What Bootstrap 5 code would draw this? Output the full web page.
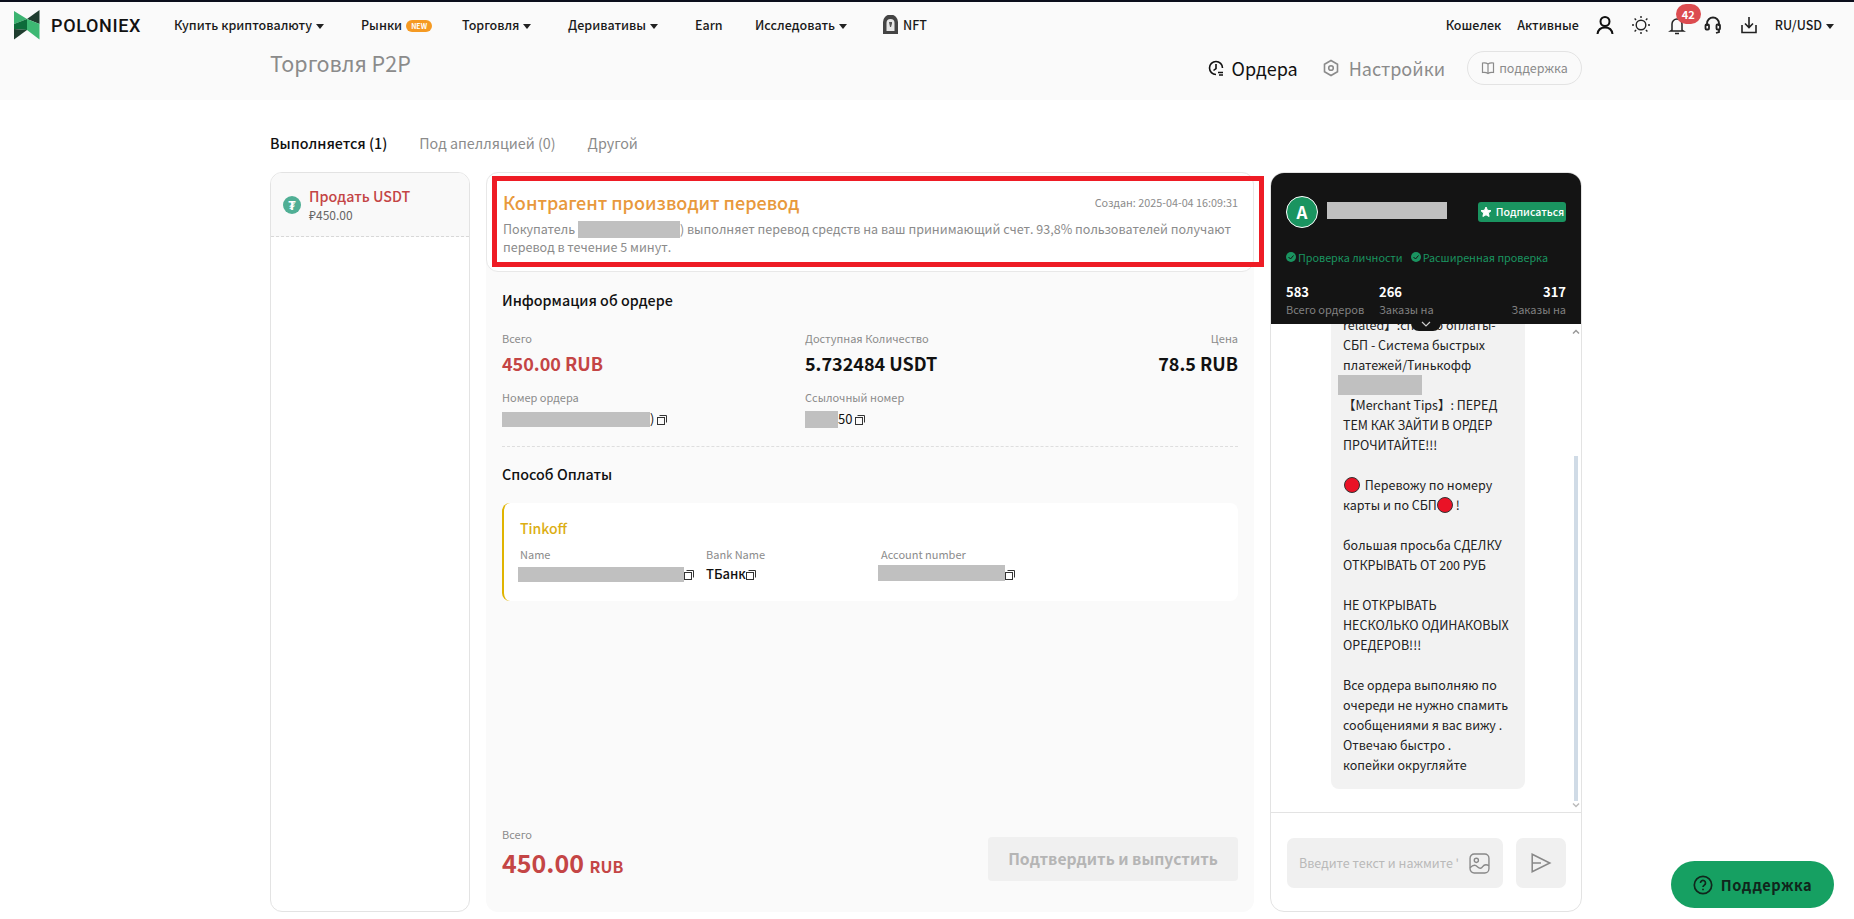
<!DOCTYPE html>
<html lang="ru">

<head>
    <meta charset="UTF-8">
    <meta name="viewport" content="width=device-width, initial-scale=1.0">
    <title>Торговля P2P</title>
    <link href="https://cdn.jsdelivr.net/npm/bootstrap@5.3.3/dist/css/bootstrap.min.css" rel="stylesheet">
    <script src="https://cdn.jsdelivr.net/npm/bootstrap@5.3.3/dist/js/bootstrap.bundle.min.js"></script>
    <style>
        html, body {
            height: 919px;
            overflow: hidden;
        }

        body {
            background: #fff;
            color: #111;
            font-family: "Noto Sans CJK SC", "Noto Sans", sans-serif;
            font-size: 13px;
            border-top: 2px solid #0b0e1c;
        }

        .top-area { background: #fafafa; height: 98px; }

        .top-nav { height: 46px; padding: 0 14px; }

        .logo-word { font-family: "Roboto", sans-serif; font-size: 18px; font-weight: 500; margin-left: 11px; width: 123px; letter-spacing: .65px; color: #111; flex-shrink: 0; }

        .nav-item-p { font-size: 12.5px; font-weight: 500; color: #1a1a1a; white-space: nowrap; flex-shrink: 0; }

        .caret-d { display: inline-block; border-left: 4px solid transparent; border-right: 4px solid transparent; border-top: 5px solid #222; margin-left: 4px; vertical-align: 1px; }

        .new-tag { background: #f59a23; color: #fff; font-size: 7px; line-height: 12px; border-radius: 6px; padding: 0 5px; margin-left: 4px; display: inline-block; vertical-align: 1px; font-weight: 700; }

        .nav-a { width: 187px; }
        .nav-b { width: 101px; }
        .nav-c { width: 106px; }
        .nav-d { width: 127px; }
        .nav-e { width: 60px; }
        .nav-f { width: 127px; }

        .nav-ico { margin-left: 16px; }

        .ru-usd { margin-left: 16px; margin-right: 6px; }

        .bell-wrap { position: relative; }

        .bell-count { position: absolute; left: 9px; top: -11px; width: 25px; height: 20px; border-radius: 10px; background: #dc4c50; color: #fff; font-size: 11px; font-weight: 700; line-height: 20px; text-align: center; }

        .page-wrap { width: 1312px; margin-left: 270px; }

        .sub-head { height: 52px; }

        .page-title { font-size: 21.5px; color: #8b8b8b; line-height: 30px; }

        .side-links { margin-top: 3px; }

        .side-link { font-size: 18px; color: #111; }
        .side-link.off { color: #8b8b8b; margin-left: 25px; }

        .order-ico { margin-right: 7px; }
        .set-ico { margin-right: 10px; }

        .help-pill { height: 34px; width: 115px; border: 1px solid #e3e3e3; border-radius: 17px; color: #8b8b8b; font-size: 12.5px; margin-left: 22px; }

        .tabs-row { height: 72px; font-size: 14.3px; padding-top: 32px; gap: 32px; line-height: 22px; color: #8b8b8b; }
        .tabs-row .on { color: #111; font-weight: 500; }

        .columns-row { height: 740px; gap: 16px; }

        .left-col { width: 200px; border: 1px solid #e3e3e3; border-radius: 12px; overflow: hidden; }

        .left-item { height: 64px; background: #f9f9f9; border-bottom: 1px dashed #d8d8d8; padding: 0 10px 0 12px; gap: 8px; }

        .left-item .ttl { color: #c44545; font-size: 14.3px; font-weight: 500; line-height: 20px; }
        .left-item .sum { color: #666; font-size: 12px; line-height: 18px; }

        .tether { width: 18px; height: 18px; border-radius: 50%; background: #50af95; color: #fff; font-size: 13px; line-height: 18px; text-align: center; font-weight: 700; }

        .mid-col { width: 768px; background: #fafafa; border-radius: 12px; position: relative; }

        .status-box { height: 100px; background: #fff; border: 1px solid #e8e8e8; border-radius: 12px; padding: 15px 15px 0 16px; }

        .status-ttl { color: #e8993c; font-size: 18px; font-weight: 500; line-height: 28px; }
        .status-date { color: #8b8b8b; font-size: 10.8px; }
        .status-txt { color: #8b8b8b; font-size: 12.55px; line-height: 18px; margin-top: 4px; white-space: nowrap; }

        .red-frame { position: absolute; left: 6px; top: 4px; width: 772px; height: 91px; border: 5px solid #ee1c25; pointer-events: none; }

        .hide-box { display: inline-block; background: #c0c0c0; vertical-align: middle; }

        .hb-buyer { width: 102px; height: 17px; vertical-align: -4px; }
        .hb-order { width: 148px; height: 15px; vertical-align: -3px; }
        .hb-ref { width: 33px; height: 17px; vertical-align: -4px; }
        .hb-name { width: 166px; height: 15px; margin-left: -2px; vertical-align: -3px; }
        .hb-acc { width: 127px; height: 16px; margin-left: -3px; vertical-align: -2px; }
        .hb-user { width: 120px; height: 17px; margin-left: 9px; margin-top: -4px; }

        .info-wrap { padding: 0 16px; }

        .block-ttl { font-size: 14.3px; font-weight: 500; line-height: 20px; color: #111; }

        .info-ttl { margin-top: 18px; }
        .info-1 { margin-top: 20px; }
        .info-2 { margin-top: 14px; }
        .dash-a { margin-top: 17px; }
        .pay-ttl { margin-top: 17px; margin-bottom: 19px; }

        .lbl { font-size: 11px; color: #8b8b8b; line-height: 16px; }
        .big-val { font-size: 18px; font-weight: 700; line-height: 24px; color: #111; margin-top: 5px; }
        .red-t { color: #c44545; }

        .info-cols { display: grid; grid-template-columns: 303px 1fr 1fr; }

        .small-val { font-size: 13px; line-height: 20px; color: #111; }
        .val-row { margin-top: 4px; }

        .copy-i { width: 10px; height: 10px; vertical-align: -1px; }

        .dash-line { border-top: 1px dashed #dedede; }

        .pay-card { height: 98px; background: #fff; border-left: 2px solid #e0b400; border-radius: 8px; padding: 14px 16px 0 16px; }
        .pay-name { color: #dcae13; font-size: 14px; font-weight: 500; line-height: 22px; }
        .pay-cols { display: grid; grid-template-columns: 186px 175px 1fr; margin-top: 7px; }
        .pay-val { margin-top: 2px; font-weight: 500; }

        .bottom-bar { margin-top: auto; padding: 0 16px 30px; }
        .sum-big { font-size: 25px; font-weight: 700; line-height: 32px; color: #c44545; }
        .sum-big small { font-size: 16px; }
        .btn-off { width: 250px; height: 44px; background: #f0f0f0; color: #b5b5b5; font-size: 15.7px; font-weight: 700; border-radius: 4px; margin-bottom: 1px; }

        .chat-col { width: 312px; border: 1px solid #e3e3e3; border-radius: 14px; overflow: hidden; position: relative; }

        .chat-head { height: 152px; background: #141414; padding: 24px 16px 0 16px; margin: -1px -1px 0; position: relative; z-index: 2; overflow: hidden; flex-shrink: 0; }

        .chat-ava { width: 32px; height: 32px; border-radius: 50%; background: #1a9460; border: 1px solid #fff; color: #fff; font-weight: 700; font-size: 17px; line-height: 30px; text-align: center; }

        .follow-btn { width: 88px; background: #1a9460; color: #fff; font-size: 10.6px; font-weight: 500; height: 20px; line-height: 20px; border-radius: 3px; white-space: nowrap; }

        .verify-row { color: #1a9460; font-size: 10.8px; margin-top: 20px; line-height: 18px; gap: 8px; }
        .vr-item { white-space: nowrap; gap: 2px; }

        .stat-cols { display: grid; grid-template-columns: 93px 1fr 1fr; margin-top: 17px; color: #fff; }
        .stat-num { font-size: 13px; font-weight: 700; line-height: 18px; }
        .stat-lbl { font-size: 11px; color: #808080; line-height: 16px; width: 58px; }
        .stat-wide { width: auto; white-space: nowrap; }

        .toggle-tab { position: absolute; left: 140px; top: 146px; width: 30px; height: 12px; background: #141414; border-radius: 0 0 8px 8px; z-index: 3; padding-top: 2px; }

        .msg-list { flex: 1 1 0; overflow: hidden; justify-content: flex-end; padding: 0 0 23px 60px; min-height: 0; }

        .msg-bubble { width: 194px; background: #f2f2f2; border-radius: 0 0 8px 8px; padding: 0 8px 14px 12px; line-height: 20px; font-size: 12.5px; color: #222; flex-shrink: 0; }

        .hide-line { width: 84px; height: 20px; margin-left: -5px; display: block; }

        .red-dot { display: inline-block; width: 16px; height: 16px; border-radius: 50%; background: #ea1226; border: 1px solid #333; vertical-align: -3px; }
        .dot-first { margin-left: 1px; margin-right: 2px; }

        .scroll-thumb { position: absolute; right: 3px; top: 283px; bottom: 110px; width: 4px; background: #d0dbe6; }

        .scroll-arr { position: absolute; right: 1px; width: 8px; height: 8px; }
        .arr-up { top: 155px; }
        .arr-down { bottom: 102px; }

        .chat-foot { height: 99px; border-top: 1px solid #e3e3e3; padding: 25px 15px 0 16px; gap: 13px; flex-shrink: 0; }

        .chat-input { width: 217px; height: 50px; background: #f0f0f0; border-radius: 7px; padding: 0 13px 0 12px; color: #b9b9b9; font-size: 12.5px; white-space: nowrap; overflow: hidden; }

        .input-ph { width: 170px; overflow: hidden; }

        .send-btn { width: 50px; height: 50px; background: #f0f0f0; border-radius: 7px; }

        .help-float { position: fixed; right: 20px; bottom: 11px; width: 163px; height: 47px; background: #16a062; color: #10261c; border-radius: 24px; font-size: 14.6px; font-weight: 700; letter-spacing: .5px; gap: 8px; }
    </style>
</head>

<body>
    <div class="top-area">
        <div class="top-nav d-flex align-items-center">
            <svg width="26" height="30" viewBox="14 11 26 30">
                <path fill="#3cb371" d="M14 12L27 20L14 25Z" />
                <path fill="#1f3d2f" d="M39.5 11L27 20L39.5 25Z" />
                <path fill="#0d6b3a" d="M14 25L27 20V31L14 30Z" />
                <path fill="#3db873" d="M27 20L39.5 25V40.5L27 31Z" />
                <path fill="#1f3d2f" d="M14 30L27 31L14 40.5Z" />
            </svg>
            <span class="logo-word">POLONIEX</span>
            <span class="nav-item-p nav-a">Купить криптовалюту<i class="caret-d"></i></span>
            <span class="nav-item-p nav-b">Рынки<span class="new-tag">NEW</span></span>
            <span class="nav-item-p nav-c">Торговля<i class="caret-d"></i></span>
            <span class="nav-item-p nav-d">Деривативы<i class="caret-d"></i></span>
            <span class="nav-item-p nav-e">Earn</span>
            <span class="nav-item-p nav-f">Исследовать<i class="caret-d"></i></span>
            <span class="nav-item-p d-flex align-items-center gap-1">
                <svg width="17" height="20" viewBox="0 0 17 20">
                    <path fill="#444" d="M1 19V7a7 7 0 0 1 15 0v12z" />
                    <path fill="#e6e6e6" d="M4.5 16V8q0-4 4-4t4 4v8z" />
                    <path fill="#555" d="M7 7h3v1.5L9 12H8z" />
                </svg>
                NFT
            </span>

            <div class="ms-auto d-flex align-items-center">
                <span class="nav-item-p">Кошелек</span>
                <span class="nav-item-p ms-3">Активные</span>
                <svg class="ms-3" width="20" height="20" viewBox="0 0 20 20" fill="none" stroke="#111" stroke-width="2">
                    <circle cx="10" cy="6.5" r="4.5" />
                    <path d="M2.5 19c.5-4 3.5-6.5 7.5-6.5s7 2.5 7.5 6.5" />
                </svg>
                <svg class="nav-ico" width="20" height="20" viewBox="0 0 20 20" fill="none" stroke="#222" stroke-width="1.4">
                    <circle cx="10" cy="10" r="4.8" />
                    <path d="M10 1v2M10 17v2M1 10h2M17 10h2M3.6 3.6l1.5 1.5M14.9 14.9l1.5 1.5M3.6 16.4l1.5-1.5M14.9 5.1l1.5-1.5" />
                </svg>
                <span class="bell-wrap nav-ico d-flex">
                    <svg width="20" height="20" viewBox="0 0 20 20" fill="none" stroke="#222" stroke-width="1.5">
                        <path d="M5 15V9a5 5 0 0 1 10 0v6l1.5 1h-13zM8 18.5h4" />
                    </svg>
                    <span class="bell-count">42</span>
                </span>
                <svg class="nav-ico" width="20" height="20" viewBox="0 0 20 20" fill="none" stroke="#222" stroke-width="1.8">
                    <path d="M4 11V8.5a6 6 0 0 1 12 0V11" />
                    <rect x="2.5" y="9.5" width="3.5" height="5" rx="1" />
                    <rect x="13.5" y="9.5" width="3.5" height="5" rx="1" />
                    <path d="M16 14.5V17l-3 1" />
                </svg>
                <svg class="nav-ico" width="20" height="20" viewBox="0 0 20 20" fill="none" stroke="#222" stroke-width="1.6">
                    <path d="M10 2v10M6 8.5l4 4 4-4M3 10v7.5h14V10" />
                </svg>
                <span class="nav-item-p ru-usd">RU/USD<i class="caret-d"></i></span>
            </div>
        </div>
        <div class="page-wrap sub-head d-flex justify-content-between align-items-start">
            <div class="page-title">Торговля P2P</div>
            <div class="d-flex align-items-center side-links">
                <span class="side-link d-flex align-items-center">
                    <svg class="order-ico" width="18" height="18" viewBox="0 0 18 18" fill="none" stroke="#111" stroke-width="1.6">
                        <path d="M9 15.5a6.5 6.5 0 1 1 6.5-6.5M9 5v4.5l-2.5 2M11 13.5h5M12 16h4" />
                    </svg>
                    Ордера
                </span>
                <span class="side-link off d-flex align-items-center">
                    <svg class="set-ico" width="16" height="18" viewBox="0 0 16 18" fill="none" stroke="#8b8b8b" stroke-width="1.6">
                        <path d="M8 1.5l6.5 3.75v7.5L8 16.5l-6.5-3.75v-7.5z" />
                        <circle cx="8" cy="9" r="2.3" />
                    </svg>
                    Настройки
                </span>
                <span class="help-pill d-flex align-items-center justify-content-center gap-1">
                    <svg width="14" height="14" viewBox="0 0 14 14" fill="none" stroke="#8b8b8b" stroke-width="1.2">
                        <path d="M7 3Q5 1.5 1.5 2v9.5Q5 11 7 12.5 9 11 12.5 11.5V2Q9 1.5 7 3zV12.5" />
                    </svg>
                    поддержка
                </span>
            </div>
        </div>
    </div>

    <div class="page-wrap">
        <div class="tabs-row d-flex">
            <span class="on">Выполняется (1)</span>
            <span>Под апелляцией (0)</span>
            <span>Другой</span>
        </div>
        <div class="columns-row d-flex">
            <div class="left-col">
                <div class="left-item d-flex align-items-center">
                    <span class="tether">₮</span>
                    <div>
                        <div class="ttl">Продать USDT</div>
                        <div class="sum">₽450.00</div>
                    </div>
                </div>
            </div>

            <div class="mid-col d-flex flex-column">
                <div class="status-box">
                    <div class="d-flex justify-content-between align-items-center">
                        <span class="status-ttl">Контрагент производит перевод</span>
                        <span class="status-date">Создан: 2025-04-04 16:09:31</span>
                    </div>
                    <div class="status-txt">Покупатель <span class="hide-box hb-buyer"></span>) выполняет перевод средств на ваш принимающий счет. 93,8% пользователей получают<br>перевод в течение 5 минут.</div>
                </div>
                <div class="red-frame"></div>

                <div class="info-wrap">
                    <div class="block-ttl info-ttl">Информация об ордере</div>
                    <div class="info-cols info-1">
                        <div>
                            <div class="lbl">Всего</div>
                            <div class="big-val red-t">450.00 RUB</div>
                        </div>
                        <div>
                            <div class="lbl">Доступная Количество</div>
                            <div class="big-val">5.732484 USDT</div>
                        </div>
                        <div class="text-end">
                            <div class="lbl">Цена</div>
                            <div class="big-val">78.5 RUB</div>
                        </div>
                    </div>
                    <div class="info-cols info-2">
                        <div>
                            <div class="lbl">Номер ордера</div>
                            <div class="small-val val-row"><span class="hide-box hb-order"></span>)
                                <svg class="copy-i" viewBox="0 0 10 10" fill="none" stroke="#333" stroke-width="1"><rect x=".5" y="2.5" width="7" height="7" /><path d="M2.5 .5h7v7" /></svg>
                            </div>
                        </div>
                        <div>
                            <div class="lbl">Ссылочный номер</div>
                            <div class="small-val val-row"><span class="hide-box hb-ref"></span>50
                                <svg class="copy-i" viewBox="0 0 10 10" fill="none" stroke="#333" stroke-width="1"><rect x=".5" y="2.5" width="7" height="7" /><path d="M2.5 .5h7v7" /></svg>
                            </div>
                        </div>
                    </div>
                    <div class="dash-line dash-a"></div>
                    <div class="block-ttl pay-ttl">Способ Оплаты</div>
                    <div class="pay-card">
                        <div class="pay-name">Tinkoff</div>
                        <div class="pay-cols">
                            <div>
                                <div class="lbl">Name</div>
                                <div class="small-val pay-val"><span class="hide-box hb-name"></span><svg class="copy-i" viewBox="0 0 10 10" fill="none" stroke="#333" stroke-width="1"><rect x=".5" y="2.5" width="7" height="7" /><path d="M2.5 .5h7v7" /></svg></div>
                            </div>
                            <div>
                                <div class="lbl">Bank Name</div>
                                <div class="small-val pay-val">ТБанк<svg class="copy-i" viewBox="0 0 10 10" fill="none" stroke="#333" stroke-width="1"><rect x=".5" y="2.5" width="7" height="7" /><path d="M2.5 .5h7v7" /></svg></div>
                            </div>
                            <div>
                                <div class="lbl">Account number</div>
                                <div class="small-val pay-val"><span class="hide-box hb-acc"></span><svg class="copy-i" viewBox="0 0 10 10" fill="none" stroke="#333" stroke-width="1"><rect x=".5" y="2.5" width="7" height="7" /><path d="M2.5 .5h7v7" /></svg></div>
                            </div>
                        </div>
                    </div>
                </div>

                <div class="bottom-bar d-flex justify-content-between align-items-end">
                    <div>
                        <div class="lbl mb-1">Всего</div>
                        <div class="sum-big">450.00 <small>RUB</small></div>
                    </div>
                    <div class="btn-off d-flex align-items-center justify-content-center">Подтвердить и выпустить</div>
                </div>
            </div>

            <div class="chat-col d-flex flex-column">
                <div class="chat-head">
                    <div class="d-flex align-items-center">
                        <span class="chat-ava">A</span>
                        <span class="hide-box hb-user"></span>
                        <span class="follow-btn ms-auto d-flex align-items-center justify-content-center gap-1">
                            <svg width="12" height="12" viewBox="0 0 12 12"><path fill="#fff" stroke="#fff" stroke-linejoin="round" d="M6 1l1.5 3.3 3.5.4-2.600 2.400.7 3.400L6 8.800l-3.100 1.700.7-3.400L1 4.700l3.500-.4z" /></svg>
                            Подписаться
                        </span>
                    </div>
                    <div class="verify-row d-flex">
                        <span class="d-flex align-items-center vr-item"><svg width="10" height="10" viewBox="0 0 10 10"><circle cx="5" cy="5" r="5" fill="#1a9460" /><path d="M2.5 5l2 2 3-3.500" fill="none" stroke="#141414" stroke-width="1" /></svg>Проверка личности</span>
                        <span class="d-flex align-items-center vr-item"><svg width="10" height="10" viewBox="0 0 10 10"><circle cx="5" cy="5" r="5" fill="#1a9460" /><path d="M2.5 5l2 2 3-3.500" fill="none" stroke="#141414" stroke-width="1" /></svg>Расширенная проверка</span>
                    </div>
                    <div class="stat-cols">
                        <div><div class="stat-num">583</div><div class="stat-lbl stat-wide">Всего ордеров</div></div>
                        <div><div class="stat-num">266</div><div class="stat-lbl">Заказы на покупку</div></div>
                        <div class="text-end"><div class="stat-num">317</div><div class="stat-lbl ms-auto">Заказы на продажу</div></div>
                    </div>
                </div>
                <div class="toggle-tab">
                    <svg class="d-block mx-auto" width="10" height="6" viewBox="0 0 10 6" fill="none" stroke="#ccc" stroke-width="1.2"><path d="M1 1l4 4 4-4" /></svg>
                </div>

                <div class="msg-list d-flex flex-column">
                    <div class="msg-bubble">
                        【Order<br>
                        related】:способ оплаты-<br>
                        СБП - Система быстрых<br>
                        платежей/Тинькофф<br>
                        <span class="hide-box hide-line"></span>
                        【Merchant Tips】: ПЕРЕД<br>
                        ТЕМ КАК ЗАЙТИ В ОРДЕР<br>
                        ПРОЧИТАЙТЕ!!!<br>
                        <br>
                        <span class="red-dot dot-first"></span> Перевожу по номеру<br>
                        карты и по СБП<span class="red-dot"></span> !<br>
                        <br>
                        большая просьба СДЕЛКУ<br>
                        ОТКРЫВАТЬ ОТ 200 РУБ<br>
                        <br>
                        НЕ ОТКРЫВАТЬ<br>
                        НЕСКОЛЬКО ОДИНАКОВЫХ<br>
                        ОРЕДЕРОВ!!!<br>
                        <br>
                        Все ордера выполняю по<br>
                        очереди не нужно спамить<br>
                        сообщениями я вас вижу .<br>
                        Отвечаю быстро .<br>
                        копейки округляйте
                    </div>
                </div>
                <svg class="scroll-arr arr-up" viewBox="0 0 8 8" fill="none" stroke="#999" stroke-width="1.5"><path d="M1 5.5l3-3 3 3" /></svg>
                <div class="scroll-thumb"></div>
                <svg class="scroll-arr arr-down" viewBox="0 0 8 8" fill="none" stroke="#bbb" stroke-width="1.5"><path d="M1 2.5l3 3 3-3" /></svg>

                <div class="chat-foot d-flex">
                    <div class="chat-input d-flex align-items-center justify-content-between">
                        <span class="input-ph">Введите текст и нажмите '</span>
                        <svg width="21" height="21" viewBox="0 0 20 20" fill="none" stroke="#888" stroke-width="1.3">
                            <rect x="1" y="1" width="18" height="18" rx="4" />
                            <circle cx="7" cy="7" r="2" />
                            <path d="M1 14q4-4 7-1t5 0 6-1" />
                        </svg>
                    </div>
                    <div class="send-btn d-flex align-items-center justify-content-center">
                        <svg width="22" height="22" viewBox="0 0 20 20" fill="none" stroke="#888" stroke-width="1.4">
                            <path d="M2 2l16 8-16 8zM2 10h8" />
                        </svg>
                    </div>
                </div>
            </div>
        </div>
    </div>

    <div class="help-float d-flex align-items-center justify-content-center">
        <svg width="20" height="20" viewBox="0 0 20 20" fill="none" stroke="#10261c" stroke-width="1.7">
            <circle cx="10" cy="10" r="8.7" />
            <path d="M7.5 8a2.5 2.5 0 1 1 3.8 2.1c-.9.6-1.3 1-1.3 2" />
            <path d="M10 13.8v1.4" />
        </svg>
        Поддержка
    </div>
</body>

</html>
